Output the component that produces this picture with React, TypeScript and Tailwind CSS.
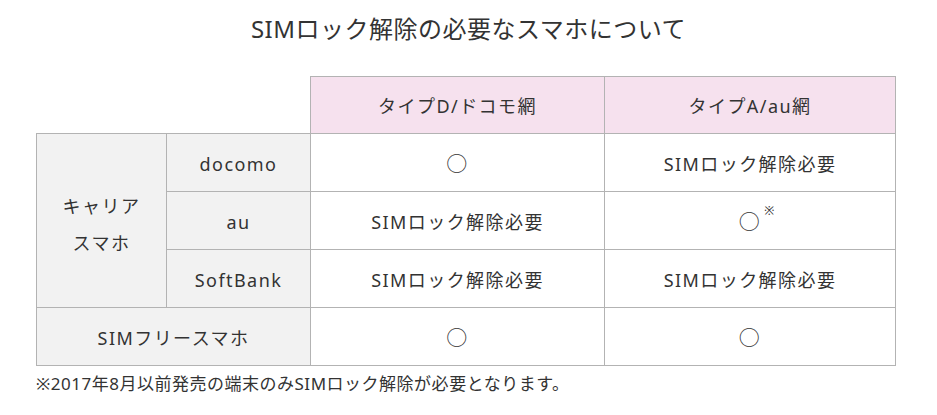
const font = {
  fontFamily: '"Noto Sans", "Noto Sans CJK JP", sans-serif',
};

const rows = [
  { carrier: "docomo", d: "○", a: "SIMロック解除必要" },
  { carrier: "au", d: "SIMロック解除必要", a: "○※" },
  { carrier: "SoftBank", d: "SIMロック解除必要", a: "SIMロック解除必要" },
];

const Circle = () => <span className="text-[21px] leading-none">○</span>;

const Cell = ({ value }: { value: string }) => {
  if (value === "○※") {
    return (
      <td className="border border-[#b3b3b3] bg-white text-center pt-[4px]">
        <span className="relative">
          <Circle />
          <span className="absolute -right-[13px] -top-[8px] text-[12px] tracking-normal">※</span>
        </span>
      </td>
    );
  }
  return (
    <td className="border border-[#b3b3b3] bg-white text-center pt-[4px]">
      {value === "○" ? <Circle /> : value}
    </td>
  );
};

export default function App() {
  return (
    <div
      className="w-[937px] h-[415px] bg-white text-[#333] overflow-hidden"
      style={font}
    >
      <h2 className="pt-[12px] text-center text-[24px] leading-[34px] tracking-[0.5px] font-normal">
        SIMロック解除の必要なスマホについて
      </h2>
      <div className="pl-[36px] pt-[30px]">
        <table className="w-[859px] table-fixed border-collapse text-[18px] tracking-[0.08em]">
          <colgroup>
            <col className="w-[130px]" />
            <col className="w-[144px]" />
            <col className="w-[294px]" />
            <col className="w-[291px]" />
          </colgroup>
          <thead>
            <tr className="h-[57px]">
              <th colSpan={2} className="font-normal"></th>
              <th className="border border-[#b3b3b3] bg-[#f6e1ee] font-normal pt-[2px]">タイプD/ドコモ網</th>
              <th className="border border-[#b3b3b3] bg-[#f6e1ee] font-normal pt-[2px]">タイプA/au網</th>
            </tr>
          </thead>
          <tbody>
            {rows.map((r, i) => (
              <tr key={r.carrier} className="h-[58px]">
                {i === 0 && (
                  <td
                    rowSpan={3}
                    className="border border-[#b3b3b3] bg-[#f2f2f2] text-center leading-[37px] pt-[8px]"
                  >
                    キャリア
                    <br />
                    スマホ
                  </td>
                )}
                <td className="border border-[#b3b3b3] bg-[#f2f2f2] text-center pt-[4px]">{r.carrier}</td>
                <Cell value={r.d} />
                <Cell value={r.a} />
              </tr>
            ))}
            <tr className="h-[58px]">
              <td colSpan={2} className="border border-[#b3b3b3] bg-[#f2f2f2] text-center pt-[4px]">
                SIMフリースマホ
              </td>
              <td className="border border-[#b3b3b3] bg-white text-center pt-[4px]">
                <Circle />
              </td>
              <td className="border border-[#b3b3b3] bg-white text-center pt-[4px]">
                <Circle />
              </td>
            </tr>
          </tbody>
        </table>
        <p className="pt-[7px] text-[17px] leading-[22px] tracking-[0.03em]">
          ※2017年8月以前発売の端末のみSIMロック解除が必要となります。
        </p>
      </div>
    </div>
  );
}
